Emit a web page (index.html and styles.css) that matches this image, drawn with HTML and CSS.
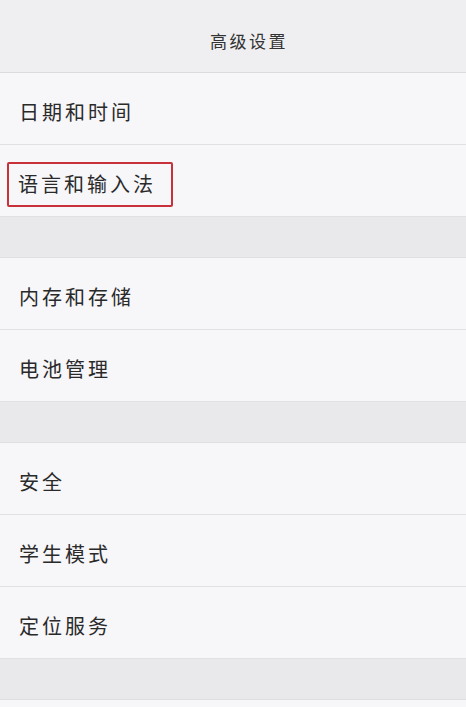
FILE: index.html
```html
<!DOCTYPE html>
<html lang="zh-CN">
<head>
<meta charset="utf-8">
<title>高级设置</title>
<link rel="stylesheet" href="styles.css">
</head>
<body>
<div class="page">
  <header class="topbar"><h1 class="title">高级设置</h1></header>
  <ul class="group">
    <li class="row"><span class="label">日期和时间</span></li>
    <li class="row"><span class="label highlight">语言和输入法</span></li>
  </ul>
  <div class="spacer"></div>
  <ul class="group">
    <li class="row"><span class="label">内存和存储</span></li>
    <li class="row"><span class="label">电池管理</span></li>
  </ul>
  <div class="spacer"></div>
  <ul class="group">
    <li class="row"><span class="label">安全</span></li>
    <li class="row"><span class="label">学生模式</span></li>
    <li class="row"><span class="label">定位服务</span></li>
  </ul>
  <div class="spacer"></div>
  <ul class="group">
    <li class="row"><span class="label"></span></li>
  </ul>
</div>
</body>
</html>
```

FILE: styles.css
```css
html, body {
  margin: 0;
  padding: 0;
  background: #f7f6f9;
  font-family: "Noto Sans CJK SC", "Noto Sans", sans-serif;
  color: #2b2b2b;
  overflow: hidden;
}
.page {
  width: 466px;
  height: 707px;
  overflow: hidden;
  display: flex;
  flex-direction: column;
}
.topbar {
  flex: 0 0 auto;
  box-sizing: border-box;
  height: 73px;
  padding-top: 8px;
  border-bottom: 1px solid #dcdbde;
  background: #efeff1;
  display: flex;
  align-items: center;
  justify-content: center;
}
.title {
  margin: 0;
  padding-left: 32px;
  font-size: 17px;
  font-weight: 400;
  letter-spacing: 2.5px;
  color: #333;
}
.group {
  list-style: none;
  margin: 0;
  padding: 0;
  flex: 0 0 auto;
}
.row {
  box-sizing: border-box;
  height: 72px;
  padding-top: 6px;
  border-bottom: 1px solid #e1e0e4;
  background: #f7f6f9;
  display: flex;
  align-items: center;
  padding-left: 19px;
}
.label {
  font-size: 20px;
  line-height: 28px;
  letter-spacing: 3px;
  color: #2a2a2a;
}
.highlight {
  position: relative;
  margin-left: -1px;
}
.highlight::after {
  content: "";
  position: absolute;
  left: -11px;
  right: -17px;
  top: -8px;
  bottom: -9px;
  border: 2px solid #c8313a;
  border-radius: 2px;
}
.spacer {
  flex: 0 0 auto;
  height: 40px;
  background: #e9e8eb;
  border-bottom: 1px solid #dfdee2;
}
```
